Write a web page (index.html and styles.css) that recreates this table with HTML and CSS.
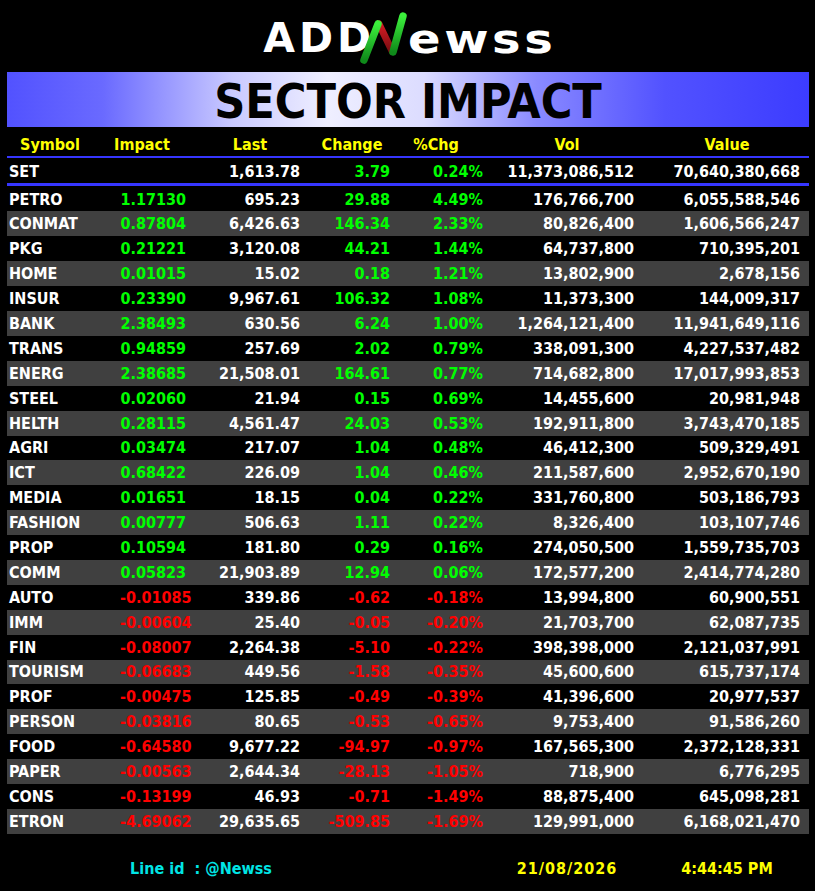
FILE: index.html
```html
<!DOCTYPE html>
<html>
<head>
<meta charset="utf-8">
<link rel="stylesheet" href="styles.css">
</head>
<body>
<div class="page">
  <header class="logo">
    <span class="logo-add">ADD</span>
    <svg class="logo-n" width="50" height="54" viewBox="0 0 50 54">
      <defs>
        <linearGradient id="gl" x1="0" y1="1" x2="0" y2="0">
          <stop offset="0" stop-color="#0f8a1a"/>
          <stop offset="1" stop-color="#3cf03c"/>
        </linearGradient>
        <linearGradient id="rd" x1="0" y1="0" x2="0" y2="1">
          <stop offset="0" stop-color="#d41c24"/>
          <stop offset="1" stop-color="#7a0d12"/>
        </linearGradient>
      </defs>
      <line x1="20" y1="13" x2="33" y2="40" stroke="url(#rd)" stroke-width="7" stroke-linecap="round"/>
      <line x1="5" y1="49" x2="19" y2="13" stroke="url(#gl)" stroke-width="7.5" stroke-linecap="round"/>
      <line x1="34" y1="41" x2="44" y2="5" stroke="url(#gl)" stroke-width="7.5" stroke-linecap="round"/>
    </svg>
    <span class="logo-ewss">ewss</span>
  </header>

  <div class="banner"><h1 class="banner-title">SECTOR IMPACT</h1></div>

  <div class="head-row">
    <div>Symbol</div><div>Impact</div><div>Last</div><div>Change</div><div>%Chg</div><div>Vol</div><div>Value</div>
  </div>

  <div class="row set-row">
    <div class="sym">SET</div><div></div><div>1,613.78</div><div class="up">3.79</div><div class="up">0.24%</div><div>11,373,086,512</div><div>70,640,380,668</div>
  </div>

  <div class="rows">
    <div class="row"><div class="sym">PETRO</div><div class="up">1.17130</div><div>695.23</div><div class="up">29.88</div><div class="up">4.49%</div><div>176,766,700</div><div>6,055,588,546</div></div>
    <div class="row"><div class="sym">CONMAT</div><div class="up">0.87804</div><div>6,426.63</div><div class="up">146.34</div><div class="up">2.33%</div><div>80,826,400</div><div>1,606,566,247</div></div>
    <div class="row"><div class="sym">PKG</div><div class="up">0.21221</div><div>3,120.08</div><div class="up">44.21</div><div class="up">1.44%</div><div>64,737,800</div><div>710,395,201</div></div>
    <div class="row"><div class="sym">HOME</div><div class="up">0.01015</div><div>15.02</div><div class="up">0.18</div><div class="up">1.21%</div><div>13,802,900</div><div>2,678,156</div></div>
    <div class="row"><div class="sym">INSUR</div><div class="up">0.23390</div><div>9,967.61</div><div class="up">106.32</div><div class="up">1.08%</div><div>11,373,300</div><div>144,009,317</div></div>
    <div class="row"><div class="sym">BANK</div><div class="up">2.38493</div><div>630.56</div><div class="up">6.24</div><div class="up">1.00%</div><div>1,264,121,400</div><div>11,941,649,116</div></div>
    <div class="row"><div class="sym">TRANS</div><div class="up">0.94859</div><div>257.69</div><div class="up">2.02</div><div class="up">0.79%</div><div>338,091,300</div><div>4,227,537,482</div></div>
    <div class="row"><div class="sym">ENERG</div><div class="up">2.38685</div><div>21,508.01</div><div class="up">164.61</div><div class="up">0.77%</div><div>714,682,800</div><div>17,017,993,853</div></div>
    <div class="row"><div class="sym">STEEL</div><div class="up">0.02060</div><div>21.94</div><div class="up">0.15</div><div class="up">0.69%</div><div>14,455,600</div><div>20,981,948</div></div>
    <div class="row"><div class="sym">HELTH</div><div class="up">0.28115</div><div>4,561.47</div><div class="up">24.03</div><div class="up">0.53%</div><div>192,911,800</div><div>3,743,470,185</div></div>
    <div class="row"><div class="sym">AGRI</div><div class="up">0.03474</div><div>217.07</div><div class="up">1.04</div><div class="up">0.48%</div><div>46,412,300</div><div>509,329,491</div></div>
    <div class="row"><div class="sym">ICT</div><div class="up">0.68422</div><div>226.09</div><div class="up">1.04</div><div class="up">0.46%</div><div>211,587,600</div><div>2,952,670,190</div></div>
    <div class="row"><div class="sym">MEDIA</div><div class="up">0.01651</div><div>18.15</div><div class="up">0.04</div><div class="up">0.22%</div><div>331,760,800</div><div>503,186,793</div></div>
    <div class="row"><div class="sym">FASHION</div><div class="up">0.00777</div><div>506.63</div><div class="up">1.11</div><div class="up">0.22%</div><div>8,326,400</div><div>103,107,746</div></div>
    <div class="row"><div class="sym">PROP</div><div class="up">0.10594</div><div>181.80</div><div class="up">0.29</div><div class="up">0.16%</div><div>274,050,500</div><div>1,559,735,703</div></div>
    <div class="row"><div class="sym">COMM</div><div class="up">0.05823</div><div>21,903.89</div><div class="up">12.94</div><div class="up">0.06%</div><div>172,577,200</div><div>2,414,774,280</div></div>
    <div class="row"><div class="sym">AUTO</div><div class="down">-0.01085</div><div>339.86</div><div class="down">-0.62</div><div class="down">-0.18%</div><div>13,994,800</div><div>60,900,551</div></div>
    <div class="row"><div class="sym">IMM</div><div class="down">-0.00604</div><div>25.40</div><div class="down">-0.05</div><div class="down">-0.20%</div><div>21,703,700</div><div>62,087,735</div></div>
    <div class="row"><div class="sym">FIN</div><div class="down">-0.08007</div><div>2,264.38</div><div class="down">-5.10</div><div class="down">-0.22%</div><div>398,398,000</div><div>2,121,037,991</div></div>
    <div class="row"><div class="sym">TOURISM</div><div class="down">-0.06683</div><div>449.56</div><div class="down">-1.58</div><div class="down">-0.35%</div><div>45,600,600</div><div>615,737,174</div></div>
    <div class="row"><div class="sym">PROF</div><div class="down">-0.00475</div><div>125.85</div><div class="down">-0.49</div><div class="down">-0.39%</div><div>41,396,600</div><div>20,977,537</div></div>
    <div class="row"><div class="sym">PERSON</div><div class="down">-0.03816</div><div>80.65</div><div class="down">-0.53</div><div class="down">-0.65%</div><div>9,753,400</div><div>91,586,260</div></div>
    <div class="row"><div class="sym">FOOD</div><div class="down">-0.64580</div><div>9,677.22</div><div class="down">-94.97</div><div class="down">-0.97%</div><div>167,565,300</div><div>2,372,128,331</div></div>
    <div class="row"><div class="sym">PAPER</div><div class="down">-0.00563</div><div>2,644.34</div><div class="down">-28.13</div><div class="down">-1.05%</div><div>718,900</div><div>6,776,295</div></div>
    <div class="row"><div class="sym">CONS</div><div class="down">-0.13199</div><div>46.93</div><div class="down">-0.71</div><div class="down">-1.49%</div><div>88,875,400</div><div>645,098,281</div></div>
    <div class="row"><div class="sym">ETRON</div><div class="down">-4.69062</div><div>29,635.65</div><div class="down">-509.85</div><div class="down">-1.69%</div><div>129,991,000</div><div>6,168,021,470</div></div>
  </div>

  <footer class="foot">
    <div class="foot-line">Line id  : @Newss</div>
    <div></div>
    <div class="foot-date foot-day">21/08/2026</div>
    <div class="foot-date">4:44:45 PM</div>
  </footer>
</div>
</body>
</html>
```

FILE: styles.css
```css
html, body {
  margin: 0;
  padding: 0;
  background: #000;
}
body {
  width: 815px;
  height: 891px;
  overflow: hidden;
  font-family: "DejaVu Sans Condensed", "DejaVu Sans", sans-serif;
  font-stretch: condensed;
  font-weight: bold;
  font-size: 16px;
  color: #fff;
}
.page {
  padding: 0 6px 0 7px;
}
.logo {
  height: 72px;
  display: flex;
  align-items: flex-end;
  justify-content: center;
  padding-bottom: 13px;
  box-sizing: border-box;
  font-family: "DejaVu Sans", sans-serif;
  font-stretch: normal;
  font-weight: bold;
  color: #fff;
  line-height: 1;
}
.logo-add {
  font-size: 41px;
  letter-spacing: 4px;
}
.logo-n {
  display: block;
  flex: none;
  margin: 0 0 -6px -16px;
}
.logo-ewss {
  display: inline-block;
  font-size: 40px;
  letter-spacing: 3px;
  margin-left: -1px;
  margin-right: 21px;
  transform: scaleX(1.2);
  transform-origin: left bottom;
}
.banner {
  height: 55px;
  background: linear-gradient(90deg, #5252ff 0%, #6a6aff 12%, #c9c9ff 28%, #efefff 40%, #dcdcff 52%, #8a8aff 66%, #5252ff 82%, #3c3cff 100%);
  display: flex;
  align-items: center;
  justify-content: center;
}
.banner-title {
  margin: 0;
  font-size: 48px;
  font-weight: bold;
  color: #000;
  line-height: 1;
  padding-top: 2px;
}
.head-row {
  display: grid;
  grid-template-columns: 86px 98px 118px 86px 82px 180px 140px;
  align-items: center;
  color: #ffff00;
  text-align: center;
  border-bottom: 2px solid #3636ff;
  padding-top: 5px;
  box-sizing: border-box;
  height: 31px;
}
.row {
  display: grid;
  grid-template-columns: 113px 70px 114px 90px 93px 151px 171px;
  height: 24.9px;
  align-items: center;
  text-align: right;
}
.row > div {
  padding-right: 4px;
}
.row > div:last-child {
  padding-right: 9px;
}
.row > .sym {
  text-align: left;
  padding-left: 2px;
}
.set-row {
  padding-top: 1px;
  box-sizing: border-box;
  height: 28px;
  border-bottom: 3px solid #3636ff;
}
.rows {
  padding-top: 0.6px;
}
.rows .row:nth-child(even) {
  background: #404040;
}
.up { color: #00ff00; }
.down { color: #ff0000; }
.foot {
  display: grid;
  grid-template-columns: 388px 82px 180px 140px;
  height: 66px;
  align-items: center;
  text-align: center;
  padding-top: 4px;
  box-sizing: border-box;
}
.foot-line {
  color: #00e5e5;
  white-space: pre;
}
.foot-date {
  color: #ffff00;
}
.foot-day {
  letter-spacing: 1px;
}
```
